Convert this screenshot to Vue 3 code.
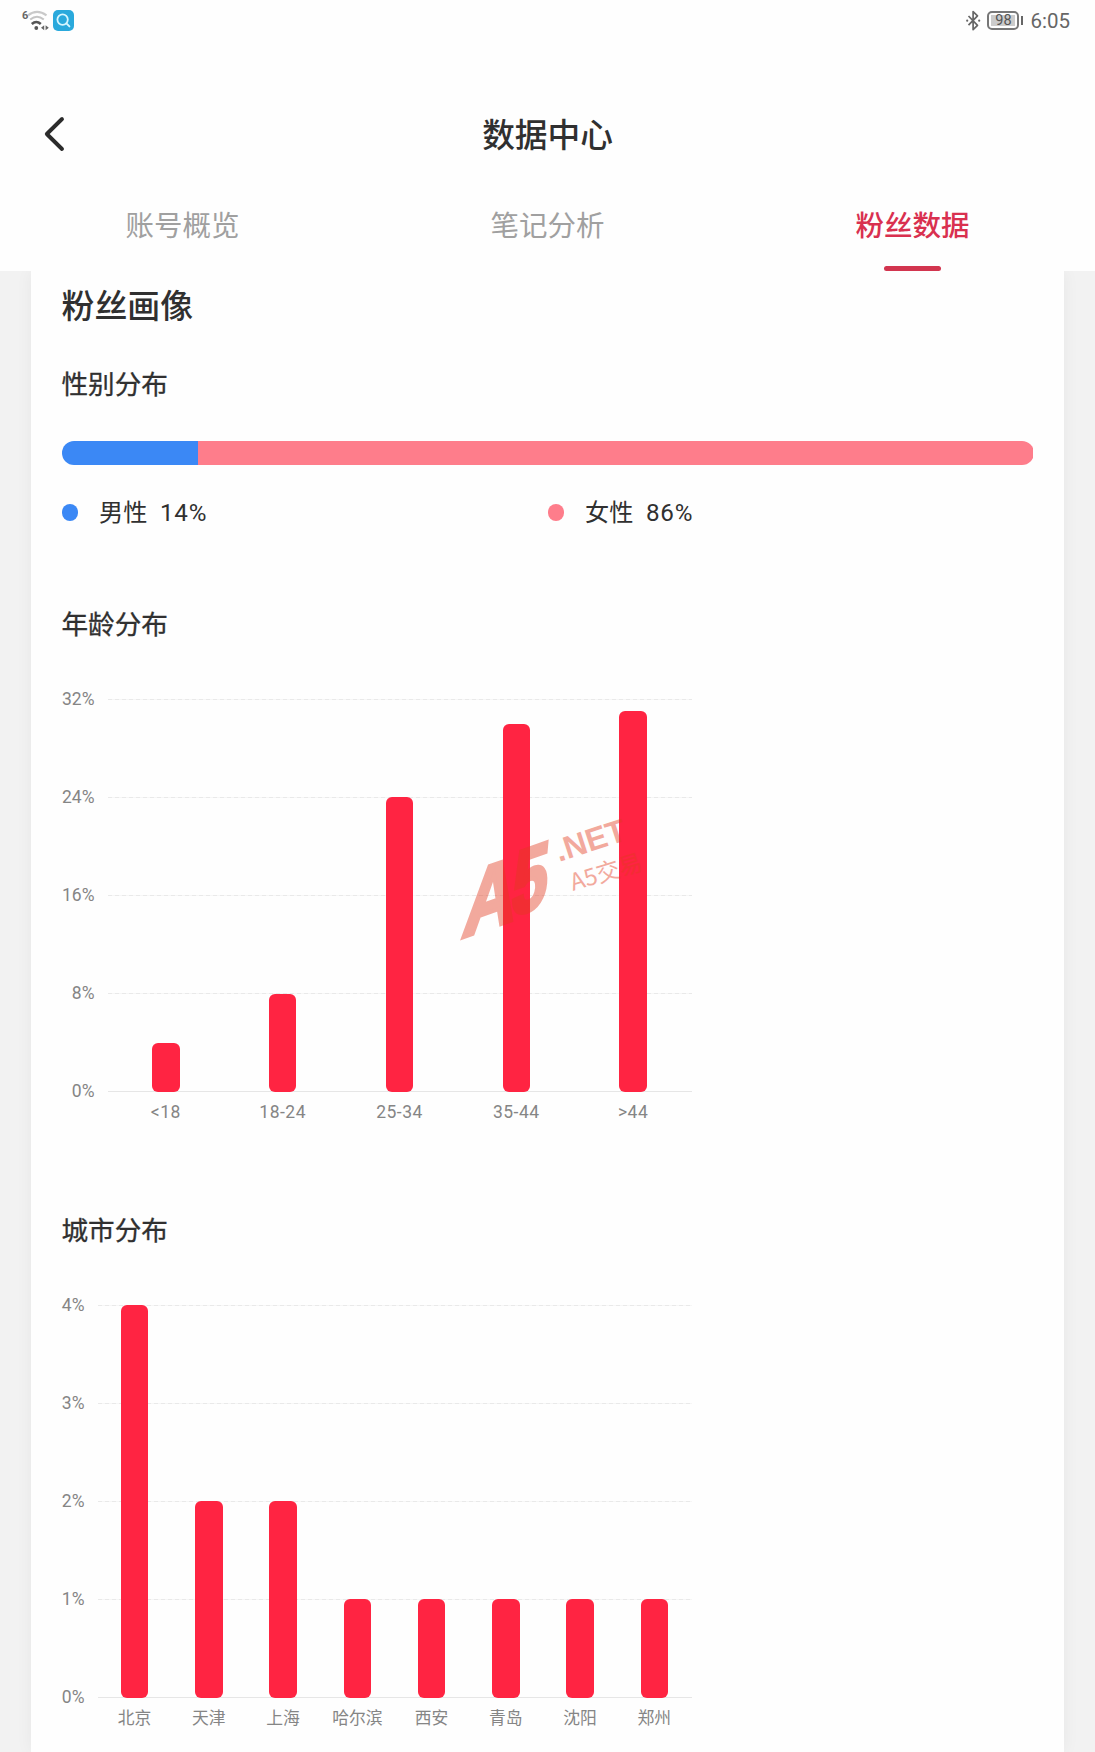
<script setup>
import { ref } from 'vue'

const tabs = ['账号概览', '笔记分析', '粉丝数据']
const activeTab = ref(2)

const genders = [
  { name: '男性', percent: 14, type: 'male' },
  { name: '女性', percent: 86, type: 'female' }
]

const charts = [
  {
    id: 'age',
    title: '年龄分布',
    max: 32,
    ticks: [32, 24, 16, 8, 0],
    items: [
      { label: '<18', value: 4 },
      { label: '18-24', value: 8 },
      { label: '25-34', value: 24 },
      { label: '35-44', value: 30 },
      { label: '>44', value: 31 }
    ]
  },
  {
    id: 'city',
    title: '城市分布',
    max: 4,
    ticks: [4, 3, 2, 1, 0],
    items: [
      { label: '北京', value: 4 },
      { label: '天津', value: 2 },
      { label: '上海', value: 2 },
      { label: '哈尔滨', value: 1 },
      { label: '西安', value: 1 },
      { label: '青岛', value: 1 },
      { label: '沈阳', value: 1 },
      { label: '郑州', value: 1 }
    ]
  }
]
</script>

<template>
  <div class="page">
    <header class="header">
      <div class="status-bar">
        <div class="status-group">
          <svg class="wifi" width="28" height="22" viewBox="0 0 28 22">
            <text x="0" y="8.5" class="wifi-gen">6</text>
            <g fill="none" stroke-linecap="butt">
              <path d="M6 5.4Q15 -1.6 24.5 5.4" stroke="#c9c9c9" stroke-width="2" />
              <path d="M8.2 9.6Q15 4 21.8 9.6" stroke="#c4c4c4" stroke-width="2" />
              <path d="M9.8 14Q14.3 10 18.8 14" stroke="#555" stroke-width="2.6" />
            </g>
            <circle cx="14.3" cy="18" r="1.9" fill="#555" />
            <path d="M22.2 15.2v5l-3.2-2.5zM23.6 15.2v5l3.2-2.5z" fill="#666" />
          </svg>
          <svg class="search" width="21" height="21" viewBox="0 0 21 21">
            <rect width="21" height="21" rx="5" fill="#2aa9dc" />
            <circle cx="9.6" cy="9.6" r="5.2" fill="none" stroke="#d6f6ff" stroke-width="1.8" />
            <path d="M13.4 13.4l3 3" stroke="#d6f6ff" stroke-width="1.9" stroke-linecap="round" />
          </svg>
        </div>
        <div class="status-group">
          <svg width="15" height="22" viewBox="0 0 15 22">
            <path d="M2.5 6l9 9.4-4.4 4.2V1.6l4.4 4.2-9 9.4" fill="none" stroke="#666" stroke-width="1.7" stroke-linejoin="round" />
            <circle cx="1.2" cy="10.7" r="1.1" fill="#666" />
            <circle cx="13.2" cy="10.7" r="1.1" fill="#666" />
          </svg>
          <div class="battery"><span class="battery-level">98</span></div>
          <span class="time">6:05</span>
        </div>
      </div>

      <div class="title-bar">
        <button class="back" aria-label="返回">
          <svg width="22" height="36" viewBox="0 0 22 36">
            <path d="M19 3L3.8 18 19 33" fill="none" stroke="#2b2b2b" stroke-width="3.9" stroke-linecap="round" stroke-linejoin="round" />
          </svg>
        </button>
        <h1 class="title">数据中心</h1>
      </div>

      <nav class="tabs">
        <button
          v-for="(tab, i) in tabs"
          :key="tab"
          class="tab"
          :class="{ active: i === activeTab }"
          @click="activeTab = i"
        >
          {{ tab }}
        </button>
      </nav>
    </header>

    <main class="card">
      <h2 class="card-title">粉丝画像</h2>

      <section class="gender">
        <h3 class="subtitle">性别分布</h3>
        <div class="gender-bar">
          <div v-for="g in genders" :key="g.type" :class="g.type" :style="{ width: g.percent + '%' }"></div>
        </div>
        <div class="legend">
          <div v-for="g in genders" :key="g.type" class="legend-item">
            <i class="dot" :class="g.type"></i>
            <span class="legend-name">{{ g.name }}</span>
            <span class="legend-value">{{ g.percent }}%</span>
          </div>
        </div>
      </section>

      <section v-for="chart in charts" :key="chart.id" :class="chart.id">
        <h3 class="subtitle">{{ chart.title }}</h3>
        <div class="chart">
          <div class="y-axis">
            <span v-for="t in chart.ticks" :key="t">{{ t }}%</span>
          </div>
          <div class="plot">
            <div class="grid">
              <i v-for="t in chart.ticks" :key="t" class="grid-line"></i>
            </div>
            <div class="bars">
              <div v-for="item in chart.items" :key="item.label" class="bar-slot">
                <div class="bar" :style="{ height: (item.value / chart.max) * 100 + '%' }"></div>
              </div>
            </div>
            <svg v-if="chart.id === 'age'" class="watermark" width="257" height="210" viewBox="-40 -30 257 210">
              <g class="mark">
                <text transform="matrix(.86 -.3 -.14 1.12 10 138)" class="mark-big">A</text>
                <text transform="matrix(.76 -.27 -.1 1.1 59 117)" class="mark-big">5</text>
                <text transform="translate(108 62) rotate(-18)" class="mark-net">.NET</text>
                <text transform="translate(122 91) rotate(-17)" class="mark-name">A5交易</text>
              </g>
            </svg>
          </div>
          <div class="x-axis">
            <span v-for="item in chart.items" :key="item.label">{{ item.label }}</span>
          </div>
        </div>
      </section>
    </main>
  </div>
</template>

<style>
body {
  margin: 0;
}
</style>

<style scoped>
.page {
  width: 1095px;
  height: 1752px;
  overflow: hidden;
  background: #f2f2f2;
  color: #303030;
  font-family: Roboto, "Noto Sans CJK SC", sans-serif;
  display: flex;
  flex-direction: column;
}

h1,
h2,
h3 {
  margin: 0;
  font-weight: 500;
}

button {
  border: none;
  background: none;
  padding: 0;
  font-family: inherit;
}

/* header */
.header {
  height: 271px;
  flex: none;
  background: #fefefe;
  display: flex;
  flex-direction: column;
  z-index: 1;
}

.status-bar {
  height: 41px;
  flex: none;
  padding: 0 25px 0 22px;
  display: flex;
  justify-content: space-between;
  align-items: center;
}

.status-group {
  display: flex;
  align-items: center;
}

.wifi-gen {
  font: 700 11px Roboto, sans-serif;
  fill: #666;
}

.search {
  margin-left: 3px;
}

.battery {
  box-sizing: border-box;
  position: relative;
  width: 32px;
  height: 19px;
  margin: 0 11px 0 6px;
  padding: 2px;
  border: 2px solid #777;
  border-radius: 5px;
  display: flex;
}

.battery::after {
  content: "";
  position: absolute;
  right: -6px;
  top: 3px;
  width: 2.5px;
  height: 9px;
  background: #666;
}

.battery-level {
  flex: 1;
  background: #cbcbcb;
  color: #555;
  font-size: 14.5px;
  line-height: 12px;
  text-align: center;
}

.time {
  font-size: 20.5px;
  line-height: 24px;
  color: #666;
}

.title-bar {
  height: 134px;
  flex: none;
  padding: 52px 43px 0;
  box-sizing: border-box;
  display: grid;
  grid-template-columns: 22px 1fr 22px;
}

.back {
  height: 81px;
  display: flex;
  align-items: center;
}

.title {
  font-size: 32.7px;
  line-height: 86px;
  text-align: center;
}

.tabs {
  flex: 1;
  display: grid;
  grid-template-columns: repeat(3, 1fr);
}

.tab {
  padding-top: 16px;
  display: flex;
  flex-direction: column;
  align-items: center;
  justify-content: space-between;
  font-size: 28.5px;
  line-height: 72px;
  color: #a0a0a0;
}

.tab.active {
  color: #d9304f;
  font-weight: 500;
}

.tab.active::after {
  content: "";
  width: 57px;
  height: 5px;
  border-radius: 3px;
  background: #d2354f;
}

/* card */
.card {
  flex: 1;
  margin: 0 31px;
  padding: 12px 30px 0 30.5px;
  background: #fefefe;
  box-shadow: 0 0 16px rgba(0, 0, 0, 0.05);
}

.card-title {
  font-size: 32.9px;
  line-height: 48px;
}

.subtitle {
  font-size: 26.6px;
  font-weight: 400;
  line-height: 40px;
  -webkit-text-stroke: 0.3px currentColor;
}

.gender {
  margin-top: 33.5px;
}

.gender-bar {
  margin-top: 36px;
  height: 24.5px;
  width: 972px;
  border-radius: 13px;
  overflow: hidden;
  display: flex;
}

.male {
  background: #3b88f5;
}

.female {
  background: #fe7d8b;
}

.legend {
  margin-top: 27.5px;
  display: grid;
  grid-template-columns: 486px 1fr;
}

.legend-item {
  display: flex;
  align-items: center;
  font-size: 24.2px;
  line-height: 40px;
}

.dot {
  width: 16.5px;
  height: 16.5px;
  border-radius: 50%;
}

.legend-name {
  margin-left: 21px;
}

.legend-value {
  margin-left: 12.5px;
  letter-spacing: 0.8px;
}

/* charts */
.age {
  margin-top: 72.5px;
}

.city {
  margin-top: 85.5px;
}

.chart {
  width: 630px;
  margin-top: 54px;
  display: grid;
  grid-template-columns: 46px 1fr;
  grid-template-rows: 393px 33px;
}

.city .chart {
  grid-template-columns: 36px 1fr;
}

.y-axis {
  margin: -10px 13px -10px 0;
  display: flex;
  flex-direction: column;
  justify-content: space-between;
  text-align: right;
  font-size: 17.5px;
  line-height: 21px;
  color: #858585;
}

.plot {
  position: relative;
  display: grid;
}

.grid,
.bars {
  grid-area: 1 / 1;
}

.grid {
  display: flex;
  flex-direction: column;
  justify-content: space-between;
}

.grid-line {
  height: 1px;
  background: repeating-linear-gradient(90deg, #e9e9e9 0 4px, #f6f6f6 4px 7px);
}

.grid-line:last-child {
  background: #e6e6e6;
}

.bars {
  display: flex;
  z-index: 1;
}

.bar-slot {
  flex: 1;
  display: flex;
  justify-content: center;
  align-items: flex-end;
}

.bar {
  width: 27.5px;
  border-radius: 6px;
  background: #ff2442;
}

.x-axis {
  grid-column: 2;
  display: grid;
  grid-auto-flow: column;
  grid-auto-columns: 1fr;
  justify-items: center;
  align-items: end;
  font-size: 17.5px;
  line-height: 26px;
  letter-spacing: 0.5px;
  color: #858585;
  white-space: nowrap;
}

.city .x-axis {
  font-size: 16.8px;
  letter-spacing: 0;
}

/* watermark over the age chart */
.watermark {
  position: absolute;
  left: 303px;
  top: 71px;
  z-index: 2;
  pointer-events: none;
}

.mark {
  fill: #e33a20;
  opacity: 0.43;
}

.mark-big {
  font: 700 84px "Liberation Sans", sans-serif;
  stroke: #e33a20;
  stroke-width: 4px;
}

.mark-net {
  font: 700 32px "Liberation Sans", sans-serif;
}

.mark-name {
  font: 400 23.5px "Noto Sans CJK SC", sans-serif;
}
</style>
